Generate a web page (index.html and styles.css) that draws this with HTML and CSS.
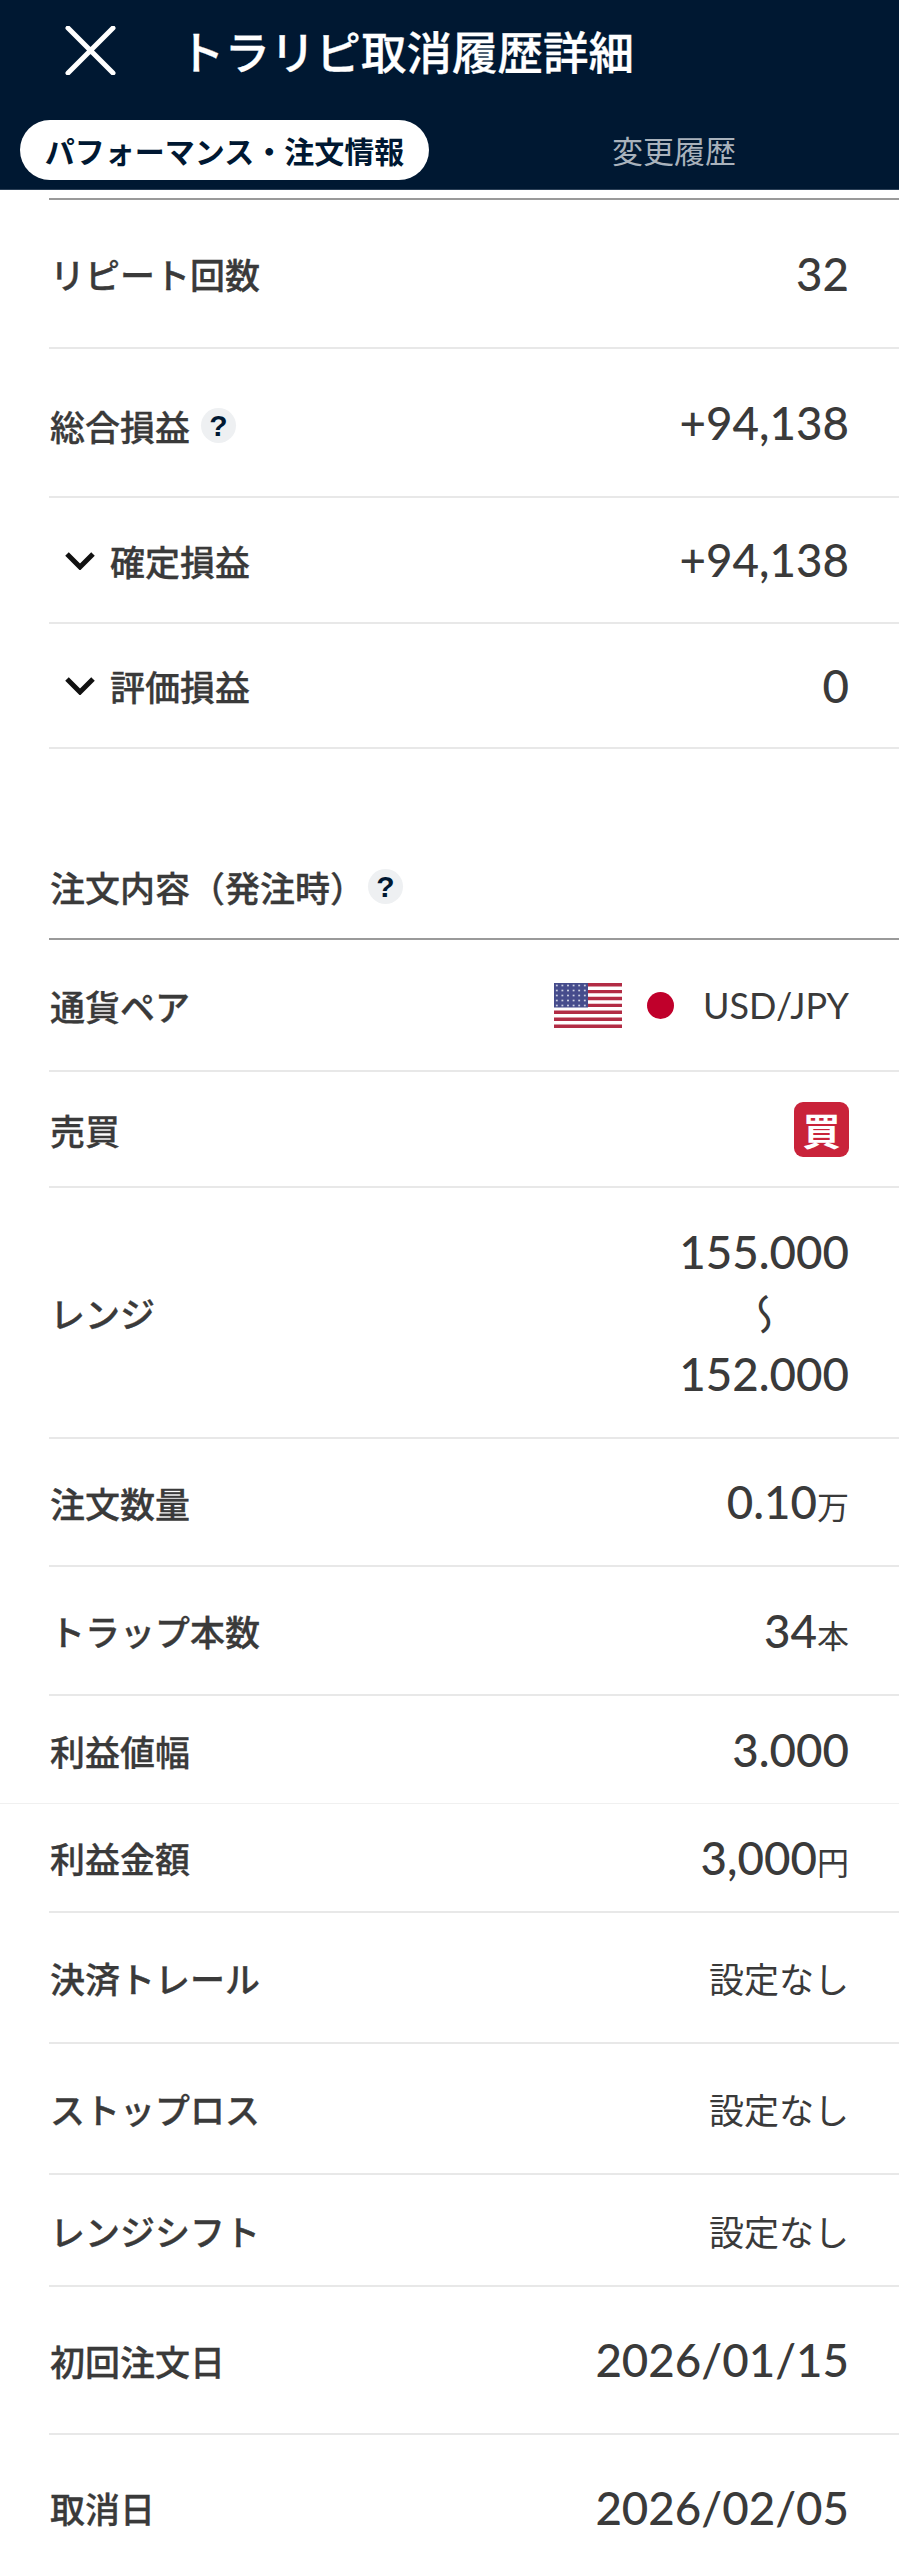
FILE: index.html
```html
<!DOCTYPE html>
<html lang="ja">
<head>
    <meta charset="UTF-8">
    <meta name="viewport" content="width=device-width, initial-scale=1.0">
    <title>トラリピ取消履歴詳細</title>
    <link rel="stylesheet" href="styles.css">
</head>
<body>
    <!-- ヘッダー -->
    <header class="header">
        <div class="title-bar">
            <svg class="close-icon" viewBox="0 0 51 49">
                <path d="M3 2 L48 47 M48 2 L3 47"></path>
            </svg>
            <h1 class="title">トラリピ取消履歴詳細</h1>
        </div>
        <div class="tabs">
            <span class="tab active">パフォーマンス・注文情報</span>
            <span class="tab">変更履歴</span>
        </div>
    </header>

    <!-- パフォーマンス -->
    <section class="list first">
        <div class="row h-149">
            <span class="label">リピート回数</span>
            <span class="value">32</span>
        </div>
        <div class="row h-149">
            <span class="label label-low">総合損益<i class="help">?</i></span>
            <span class="value">+94,138</span>
        </div>
        <div class="row h-126">
            <span class="label">
                <svg class="chevron" viewBox="0 0 30 19"><path d="M2 3 L15 16 L28 3"></path></svg>確定損益
            </span>
            <span class="value">+94,138</span>
        </div>
        <div class="row h-125">
            <span class="label">
                <svg class="chevron" viewBox="0 0 30 19"><path d="M2 3 L15 16 L28 3"></path></svg>評価損益
            </span>
            <span class="value">0</span>
        </div>
    </section>

    <!-- 注文内容 -->
    <section class="list">
        <h2 class="section-title">注文内容（発注時）<i class="help">?</i></h2>
        <div class="row h-132">
            <span class="label">通貨ペア</span>
            <span class="pair">
                <svg class="flag-us" viewBox="0 0 68 45">
                    <defs>
                        <pattern id="stars" width="5.6" height="5" patternUnits="userSpaceOnUse">
                            <circle cx="2.8" cy="2.5" r="0.9" fill="#dfe2ee"></circle>
                        </pattern>
                    </defs>
                    <rect width="68" height="45" fill="#fff"></rect>
                    <path class="stripes" d="M0 1.7H68 M0 8.6H68 M0 15.5H68 M0 22.4H68 M0 29.3H68 M0 36.2H68 M0 43.2H68"></path>
                    <rect width="34" height="24.5" fill="#464c8c"></rect>
                    <rect width="34" height="24.5" fill="url(#stars)"></rect>
                </svg>
                <i class="flag-jp"></i>
                <span class="pair-name">USD/JPY</span>
            </span>
        </div>
        <div class="row h-116">
            <span class="label">売買</span>
            <span class="buy">買</span>
        </div>
        <div class="row h-251">
            <span class="label">レンジ</span>
            <span class="value range">155.000<span class="tilde">〜</span>152.000</span>
        </div>
        <div class="row h-128">
            <span class="label">注文数量</span>
            <span class="value">0.10<small>万</small></span>
        </div>
        <div class="row h-129">
            <span class="label">トラップ本数</span>
            <span class="value">34<small>本</small></span>
        </div>
        <div class="row h-108 full-line">
            <span class="label">利益値幅</span>
            <span class="value">3.000</span>
        </div>
        <div class="row h-109">
            <span class="label">利益金額</span>
            <span class="value">3,000<small>円</small></span>
        </div>
        <div class="row h-131">
            <span class="label">決済トレール</span>
            <span class="text-value">設定なし</span>
        </div>
        <div class="row h-131">
            <span class="label">ストップロス</span>
            <span class="text-value">設定なし</span>
        </div>
        <div class="row h-112">
            <span class="label">レンジシフト</span>
            <span class="text-value">設定なし</span>
        </div>
        <div class="row h-148">
            <span class="label">初回注文日</span>
            <span class="value">2026/01/15</span>
        </div>
        <div class="row h-145 last">
            <span class="label">取消日</span>
            <span class="value">2026/02/05</span>
        </div>
    </section>
</body>
</html>
```

FILE: styles.css
```css
* {
    margin: 0;
    padding: 0;
    box-sizing: border-box;
}

body {
    background: #fff;
    color: #3a3a3a;
    font-family: Lato, "Noto Sans CJK JP", sans-serif;
}

/* ヘッダー */
.header {
    height: 190px;
    background: #001832;
    border-bottom: 1px solid #2c4057;
}

.title-bar {
    display: flex;
    align-items: center;
    height: 100px;
    padding-left: 65px;
}

.close-icon {
    width: 51px;
    height: 49px;
    margin-right: 63px;
}

.close-icon path {
    fill: none;
    stroke: #fff;
    stroke-width: 5;
    stroke-linecap: round;
}

.title {
    color: #fff;
    font-family: "Noto Sans CJK JP", sans-serif;
    font-size: 45.5px;
    font-weight: 500;
    -webkit-text-stroke: 0.3px #fff;
}

.tabs {
    display: flex;
    align-items: center;
    padding: 20px 0 0 20px;
}

.tab {
    color: #a9b2bc;
    font-family: "Noto Sans CJK JP", sans-serif;
    font-size: 31px;
    line-height: 60px;
    margin-left: 183px;
}

.tab.active {
    width: 409px;
    margin-left: 0;
    text-align: center;
    color: #001832;
    font-size: 30px;
    font-weight: 700;
    background: #fff;
    border-radius: 30px;
}

/* リスト */
.list {
    margin-left: 49px;
}

.first {
    margin-top: 8px;
    border-top: 2px solid #9a9a9a;
}

.row {
    display: flex;
    align-items: center;
    justify-content: space-between;
    padding-right: 50px;
    border-bottom: 2px solid #e8e8e8;
}

.row.last {
    border-bottom: none;
}

.h-108 { height: 108px; }
.h-109 { height: 109px; }
.h-112 { height: 112px; }
.h-116 { height: 116px; }
.h-125 { height: 125px; }
.h-126 { height: 126px; }
.h-128 { height: 128px; }
.h-129 { height: 129px; }
.h-131 { height: 131px; }
.h-132 { height: 132px; }
.h-145 { height: 145px; }
.h-148 { height: 148px; }
.h-149 { height: 149px; }
.h-251 { height: 251px; }

.full-line {
    position: relative;
    border-bottom: none;
}

.full-line::after {
    content: '';
    position: absolute;
    left: -49px;
    right: 0;
    bottom: 0;
    height: 1px;
    background: #f0f0f0;
}

.label {
    display: flex;
    align-items: center;
    padding-left: 1px;
    font-family: "Noto Sans CJK JP", sans-serif;
    font-size: 35px;
    font-weight: 500;
    -webkit-text-stroke: 0.3px #3a3a3a;
}

.label-low {
    padding-top: 5px;
}

.value {
    font-size: 45.7px;
    font-weight: 500;
    line-height: 1;
    text-align: right;
}

.value small {
    font-family: "Noto Sans CJK JP", sans-serif;
    font-size: 32px;
    font-weight: 400;
}

.range {
    display: flex;
    flex-direction: column;
    align-items: flex-end;
    line-height: 61px;
}

.tilde {
    width: 100%;
    height: 61px;
    padding-top: 3px;
    writing-mode: vertical-rl;
    display: flex;
    align-items: center;
    justify-content: center;
    font-family: "Noto Sans CJK JP", sans-serif;
    font-size: 42px;
    font-weight: 400;
    line-height: 1;
}

.text-value {
    font-family: "Noto Sans CJK JP", sans-serif;
    font-size: 35px;
}

.help {
    display: inline-block;
    width: 35px;
    height: 35px;
    margin-left: 11px;
    border-radius: 50%;
    background: #eef0f2;
    color: #001832;
    font-family: "Liberation Sans", sans-serif;
    font-size: 30px;
    font-style: normal;
    font-weight: 700;
    line-height: 35px;
    text-align: center;
    -webkit-text-stroke: 0;
}

.chevron {
    width: 30px;
    height: 19px;
    margin: 0 15px 0 15px;
}

.chevron path {
    fill: none;
    stroke: #111;
    stroke-width: 5;
}

.section-title {
    display: flex;
    align-items: center;
    height: 191px;
    padding: 124px 0 38px 1px;
    border-bottom: 2px solid #9a9a9a;
    font-family: "Noto Sans CJK JP", sans-serif;
    font-size: 35px;
    font-weight: 500;
    -webkit-text-stroke: 0.3px #3a3a3a;
}

.section-title .help {
    margin-left: 3px;
}

.pair {
    display: flex;
    align-items: center;
}

.flag-us {
    width: 68px;
    height: 45px;
}

.stripes {
    stroke: #b22c45;
    stroke-width: 3.4;
}

.flag-jp {
    width: 27px;
    height: 27px;
    margin-left: 25px;
    border-radius: 50%;
    background: #c0002b;
}

.pair-name {
    margin-left: 29px;
    font-size: 36px;
}

.buy {
    width: 55px;
    height: 55px;
    border-radius: 9px;
    background: #c9233a;
    color: #fff;
    font-family: "Noto Sans CJK JP", sans-serif;
    font-size: 38px;
    font-weight: 700;
    line-height: 53px;
    text-align: center;
}
```
